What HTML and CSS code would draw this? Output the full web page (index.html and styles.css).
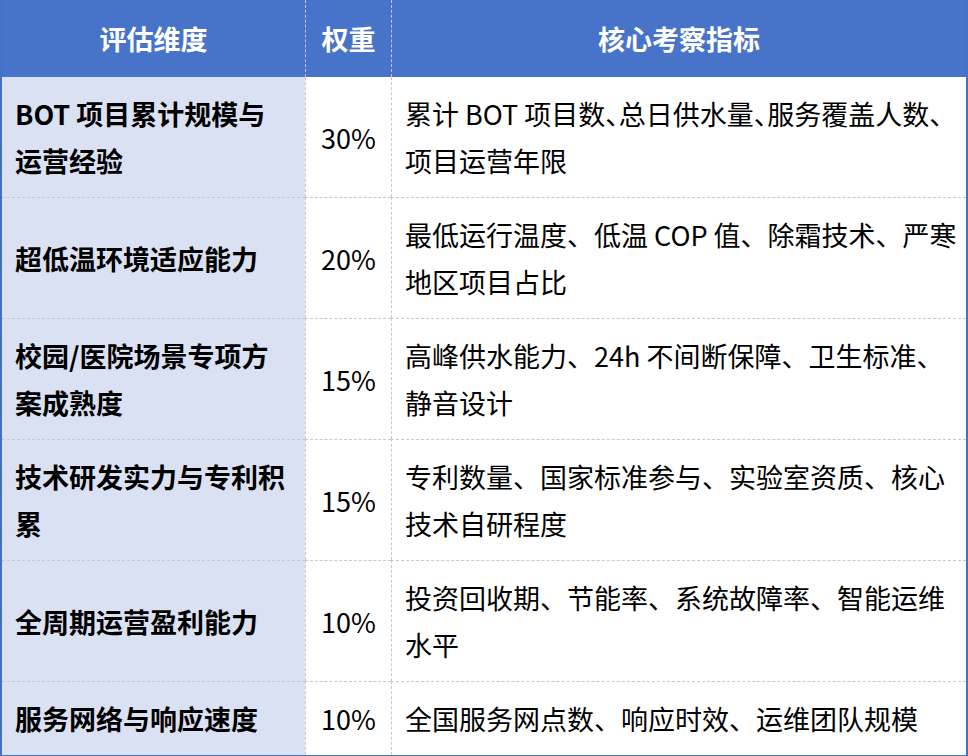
FILE: index.html
```html
<!DOCTYPE html>
<html lang="zh-CN">
<head>
<meta charset="utf-8">
<title>评估维度</title>
<link rel="stylesheet" href="styles.css">
</head>
<body>
<table class="eval">
  <colgroup>
    <col class="c-dim">
    <col class="c-weight">
    <col class="c-index">
  </colgroup>
  <thead>
    <tr>
      <th>评估维度</th>
      <th>权重</th>
      <th>核心考察指标</th>
    </tr>
  </thead>
  <tbody>
    <tr>
      <td class="dim">BOT 项目累计规模与运营经验</td>
      <td class="weight">30%</td>
      <td class="idx">累计 BOT 项目数<span class="tight">、</span>总日供水量<span class="tight">、</span>服务覆盖人数<span class="tight">、</span>项目运营年限</td>
    </tr>
    <tr>
      <td class="dim">超低温环境适应能力</td>
      <td class="weight">20%</td>
      <td class="idx">最低运行温度、低温 COP 值、除霜技术、严寒地区项目占比</td>
    </tr>
    <tr>
      <td class="dim">校园/医院场景专项方案成熟度</td>
      <td class="weight">15%</td>
      <td class="idx">高峰供水能力、24h 不间断保障、卫生标准、静音设计</td>
    </tr>
    <tr>
      <td class="dim">技术研发实力与专利积累</td>
      <td class="weight">15%</td>
      <td class="idx">专利数量、国家标准参与、实验室资质、核心技术自研程度</td>
    </tr>
    <tr>
      <td class="dim">全周期运营盈利能力</td>
      <td class="weight">10%</td>
      <td class="idx">投资回收期、节能率、系统故障率、智能运维水平</td>
    </tr>
    <tr>
      <td class="dim">服务网络与响应速度</td>
      <td class="weight">10%</td>
      <td class="idx">全国服务网点数、响应时效、运维团队规模</td>
    </tr>
  </tbody>
</table>
</body>
</html>
```
FILE: styles.css
```css
html, body {
  margin: 0;
  padding: 0;
  background: #ffffff;
}

body {
  font-family: "Noto Sans CJK SC", "Noto Sans", sans-serif;
  font-size: 27px;
  color: #000000;
}

.eval {
  width: 968px;
  table-layout: fixed;
  border-collapse: separate;
  border-spacing: 0;
  border-left: 2px solid #4472c4;
  border-right: 2px solid #4472c4;
  border-bottom: 2px solid #4472c4;
}

.c-dim { width: 303px; }
.c-weight { width: 86px; }
.c-index { width: 575px; }

.eval th {
  background: #4774c9;
  color: #ffffff;
  font-weight: 700;
  text-align: center;
  height: 77px;
  padding: 0;
  line-height: 47px;
  border-left: 1px dashed #c9c9c9;
}

.eval th:first-child {
  border-left: none;
}

.eval td {
  padding: 13px 10px 13px 13px;
  line-height: 47px;
  vertical-align: middle;
  border-top: 1px dashed #c9c9c9;
  border-left: 1px dashed #c9c9c9;
}

.eval tbody tr:first-child td {
  border-top: none;
}

.eval td.dim {
  border-left: none;
  background: #dae1f3;
  font-weight: 700;
  padding-right: 16px;
}

.eval td.weight {
  text-align: center;
  padding-left: 0;
  padding-right: 0;
}

.eval td.idx {
  padding-right: 6px;
}

.tight {
  letter-spacing: -0.5em;
}
```
